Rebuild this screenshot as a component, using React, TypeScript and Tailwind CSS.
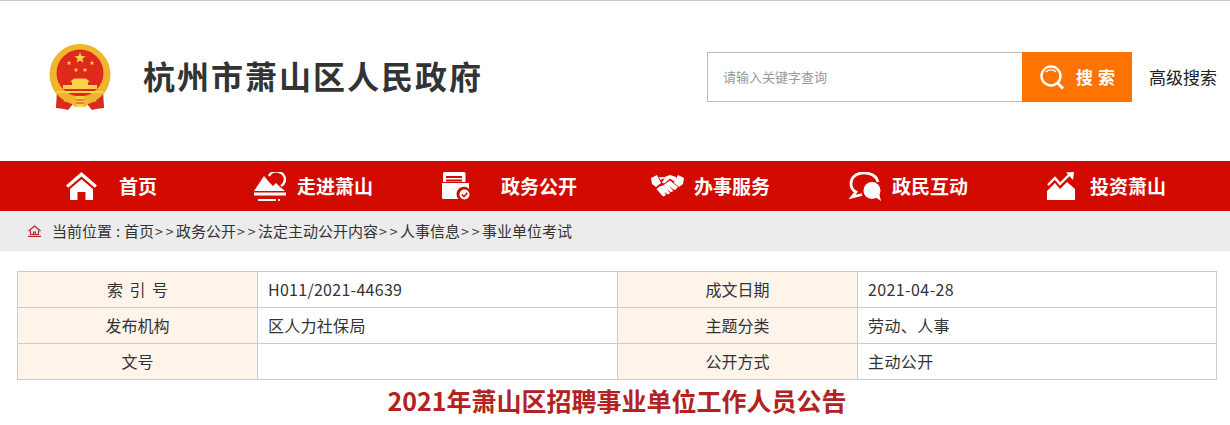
const font = "font-['Noto_Sans_CJK_SC','Microsoft_YaHei',sans-serif]";

const Star = ({ cx, cy, r, fill = "#f8d24a" }: { cx: number; cy: number; r: number; fill?: string }) => {
  const points = Array.from({ length: 10 }, (_, i) => {
    const radius = i % 2 === 0 ? r : r * 0.4;
    const angle = (Math.PI / 5) * i - Math.PI / 2;
    return `${cx + radius * Math.cos(angle)},${cy + radius * Math.sin(angle)}`;
  }).join(" ");
  return <polygon points={points} fill={fill} />;
};

const Emblem = () => (
  <svg width="62" height="68" viewBox="0 0 62 68">
    {/* ribbon */}
    <path d="M8 46 L7 64 L15 65 L19 66 L24 60 L38 60 L43 66 L47 65 L55 64 L54 46 Z" fill="#d92a1c" />
    {/* ring */}
    <circle cx="31" cy="30.5" r="30.5" fill="#eeb52d" />
    <circle cx="31" cy="29" r="23.5" fill="#dd2a1b" />
    <Star cx={31} cy={14} r={6} />
    <Star cx={20} cy={19} r={2.7} />
    <Star cx={43} cy={19} r={2.7} />
    <Star cx={27} cy={26} r={2.5} />
    <Star cx={36} cy={26} r={2.5} />
    {/* gate */}
    <path d="M21 38 L25 34.5 H37 L41 38 Z" fill="#f8d24a" />
    <rect x="23" y="38" width="16" height="3" fill="#f8d24a" />
    <rect x="14" y="41" width="34" height="4" fill="#f8d24a" />
    <rect x="8" y="47" width="46" height="2" fill="#f8d24a" />
    {/* knot */}
    <path d="M13 53 Q22 50 31 54 Q40 50 49 53 L48 58 Q42 56 36 63 H26 Q20 56 14 58 Z" fill="#eeb52d" />
    <rect x="27" y="52" width="8" height="11" fill="#f8d24a" />
    <path d="M27 56 H35 M27 59 H35" stroke="#d92a1c" strokeWidth="1" />
    <path d="M9 53 L7 64 L14 60 L15 56 Z M53 53 L55 64 L48 60 L47 56 Z" fill="#d92a1c" />
  </svg>
);

const HomeIcon = () => (
  <svg width="31" height="28" viewBox="0 0 31 28" fill="#fff">
    <path d="M15.5 0 L31 13.5 L28.8 15.8 L15.5 4.4 L2.2 15.8 L0 13.5 Z" />
    <path d="M15.5 7.2 L27 17 V28 H19.5 V20 H11.5 V28 H4 V17 Z" />
  </svg>
);

const MountainIcon = () => (
  <svg width="32" height="29" viewBox="0 0 32 29" fill="#fff">
    <path d="M0 19 L10 4 L15 10 L19 14 L22 11 L26 15 L31 19 Z" />
    <path d="M15 4 A8.5 8.5 0 0 1 31 8 A8.5 8.5 0 0 1 27 14" fill="none" stroke="#fff" strokeWidth="2.4" />
    <rect x="0" y="20.5" width="32" height="3" />
    <rect x="4" y="27" width="18" height="2" />
    <rect x="24" y="27" width="2" height="2" />
  </svg>
);

const DocIcon = () => (
  <svg width="28" height="28" viewBox="0 0 28 28" fill="#fff">
    <path d="M1 1.5 Q1 0 2.5 0 H22 Q23.5 0 23.5 1.5 V10 H1 Z" />
    <rect x="4" y="4" width="16" height="2" fill="#d20a00" />
    <rect x="4" y="7.5" width="16" height="2" fill="#d20a00" />
    <path d="M0 11 H27 V17 A7 7 0 0 0 16.5 27 H1.5 Q0 27 0 25.5 Z" />
    <circle cx="22.5" cy="22.5" r="5" />
    <path d="M19.8 22.5 L22 24.6 L25.4 20.8" fill="none" stroke="#d20a00" strokeWidth="1.5" />
  </svg>
);

const HandshakeIcon = () => (
  <svg width="33" height="25" viewBox="0 0 33 25" fill="#fff">
    <path d="M0 4 L6 1 L10 9 L5 13 L1 10 Z" />
    <path d="M33 4 L27 1 L23 9 L28 13 L32 10 Z" />
    <path d="M8 3 Q13 4 16 2 L19 1 Q22 2 25 3 L27 10 L19 4.5 L14 9 Q11 10 11 8 L14 4 Q11 5 9.5 6 Z" />
    <path d="M19 6.5 L27 13 L25 15 Q24 16.5 22.5 15.5 L18 12 L22 16.5 Q21.5 18.5 19.5 18 L16 15 L19 19 Q18 21 16 20 L13.5 18 L15 21 Q13 23 11.5 22 L5.5 15 L8.5 12.5 L12 11.5 Z" />
  </svg>
);

const ChatIcon = () => (
  <svg width="33" height="29" viewBox="0 0 33 29" fill="#fff">
    <path d="M20 1.6 C10 -1 2 4 2 12 C2 15.5 4 18.5 7 20 L3 25 L13 22.5" fill="none" stroke="#fff" strokeWidth="2.8" />
    <path d="M20 1.6 C25 2.8 28 6 29 10" fill="none" stroke="#fff" strokeWidth="2.8" />
    <circle cx="23" cy="18.5" r="8.5" />
    <path d="M26 25 L32 29 L30 21 Z" />
  </svg>
);

const ChartIcon = () => (
  <svg width="28" height="28" viewBox="0 0 28 28" fill="#fff">
    <path d="M1 13 L8 6 L13 12 L22 3" fill="none" stroke="#fff" strokeWidth="2.4" />
    <path d="M19 0.5 L27 0 L26 8 Z" />
    <path d="M0 19 L8 11 L13 17 L20 10 L28 17 V28 H0 Z" />
  </svg>
);

const navItems = [
  { label: "首页", icon: <HomeIcon />, ml: "ml-[66px]", gap: "gap-[22px]" },
  { label: "走进萧山", icon: <MountainIcon />, ml: "ml-[97px]", gap: "gap-[11px]" },
  { label: "政务公开", icon: <DocIcon />, ml: "ml-[69px]", gap: "gap-[31px]" },
  { label: "办事服务", icon: <HandshakeIcon />, ml: "ml-[74px]", gap: "gap-[10px]" },
  { label: "政民互动", icon: <ChatIcon />, ml: "ml-[79px]", gap: "gap-[10px]" },
  { label: "投资萧山", icon: <ChartIcon />, ml: "ml-[79px]", gap: "gap-[15px]" },
];

const rows = [
  ["索 引 号", "H011/2021-44639", "成文日期", "2021-04-28"],
  ["发布机构", "区人力社保局", "主题分类", "劳动、人事"],
  ["文号", "", "公开方式", "主动公开"],
];

const crumbs = ["首页", "政务公开", "法定主动公开内容", "人事信息", "事业单位考试"];

const App = () => {
  return (
    <div className={`${font} h-[425px] w-[1230px] overflow-hidden bg-white`}>
      {/* Header */}
      <div className="flex h-[161px] items-start border-t border-[#cccccc]">
        <div className="ml-[49px] mt-[43px]">
          <Emblem />
        </div>
        <h1 className="ml-[32px] mt-[53px] text-[32px] leading-[42px] font-bold tracking-[2px] text-[#333333]">杭州市萧山区人民政府</h1>
        <div className="ml-auto mt-[51px] flex h-[50px]">
          <div className="flex w-[315px] items-center border border-r-0 border-[#bbbbbb] pl-[15px] text-[13px] text-[#999999]">
            请输入关键字查询
          </div>
          <div className="flex w-[110px] items-center bg-[#ff7300] pl-[18px] text-white">
            <svg width="25" height="25" viewBox="0 0 25 25" fill="none" stroke="#fff">
              <circle cx="11" cy="11" r="9.5" strokeWidth="2.4" />
              <path d="M17.5 18 L23 23.5" strokeWidth="3" />
              <path d="M6 7 A7 7 0 0 1 16 7" strokeWidth="1.4" />
            </svg>
            <span className="ml-[11px] text-[17px] font-bold tracking-[5px]">搜索</span>
          </div>
          <div className="ml-[17px] mr-[13px] flex items-center text-[17px] text-[#222222]">高级搜索</div>
        </div>
      </div>

      {/* Nav */}
      <nav className="flex h-[50px] items-center bg-[#d20a00]">
        {navItems.map((item) => (
          <div key={item.label} className={`flex items-center ${item.ml} ${item.gap}`}>
            {item.icon}
            <span className="text-[19px] font-bold text-white">{item.label}</span>
          </div>
        ))}
      </nav>

      {/* Breadcrumb */}
      <div className="flex h-[40px] items-center bg-[#ececec] pl-[28px] text-[15px] text-[#333333]">
        <svg width="13" height="12" viewBox="0 0 13 12" fill="none" stroke="#b2252a" strokeWidth="1.2">
          <path d="M0.5 6 L6.5 1 L12.5 6" />
          <path d="M2.5 5.5 V9.5 H10.5 V5.5 M5.5 9.5 V7 H7.5 V9.5" />
          <path d="M0 11.4 H13" />
        </svg>
        <span className="ml-[11px] mr-[8px] flex items-center">
          当前位置
          <span className="ml-[4px] w-0">:</span>
        </span>
        {crumbs.map((crumb, i) => (
          <span key={crumb} className="flex items-center">
            {i > 0 && <span className="w-[22px] pl-[1px] text-[14px] tracking-[3px]">&gt;&gt;</span>}
            {crumb}
          </span>
        ))}
      </div>

      {/* Info table */}
      <div className="mx-[17px] mt-[20px] w-[1200px]">
        <div className="border-t border-l border-[#cccccc] text-[16px] text-[#333333]">
          {rows.map((row) => (
            <div key={row[0]} className="grid h-[36px] grid-cols-[240px_360px_240px_359px]">
              <div className="flex items-center justify-center border-r border-b border-[#cccccc] bg-[#fef4ea] pb-[2px] whitespace-pre [word-spacing:3px]">{row[0]}</div>
              <div className="flex items-center border-r border-b border-[#cccccc] pl-[10px] pb-[2px] tracking-[0.28px]">{row[1]}</div>
              <div className="flex items-center justify-center border-r border-b border-[#cccccc] bg-[#fef4ea] pb-[2px]">{row[2]}</div>
              <div className="flex items-center border-r border-b border-[#cccccc] pl-[10px] pb-[2px] tracking-[0.4px]">{row[3]}</div>
            </div>
          ))}
        </div>

        {/* Title */}
        <h2 className="mt-[1px] text-center text-[25px] leading-[38px] font-bold text-[#b22222]">
          2021年萧山区招聘事业单位工作人员公告
        </h2>
      </div>
    </div>
  );
};

export default App;
